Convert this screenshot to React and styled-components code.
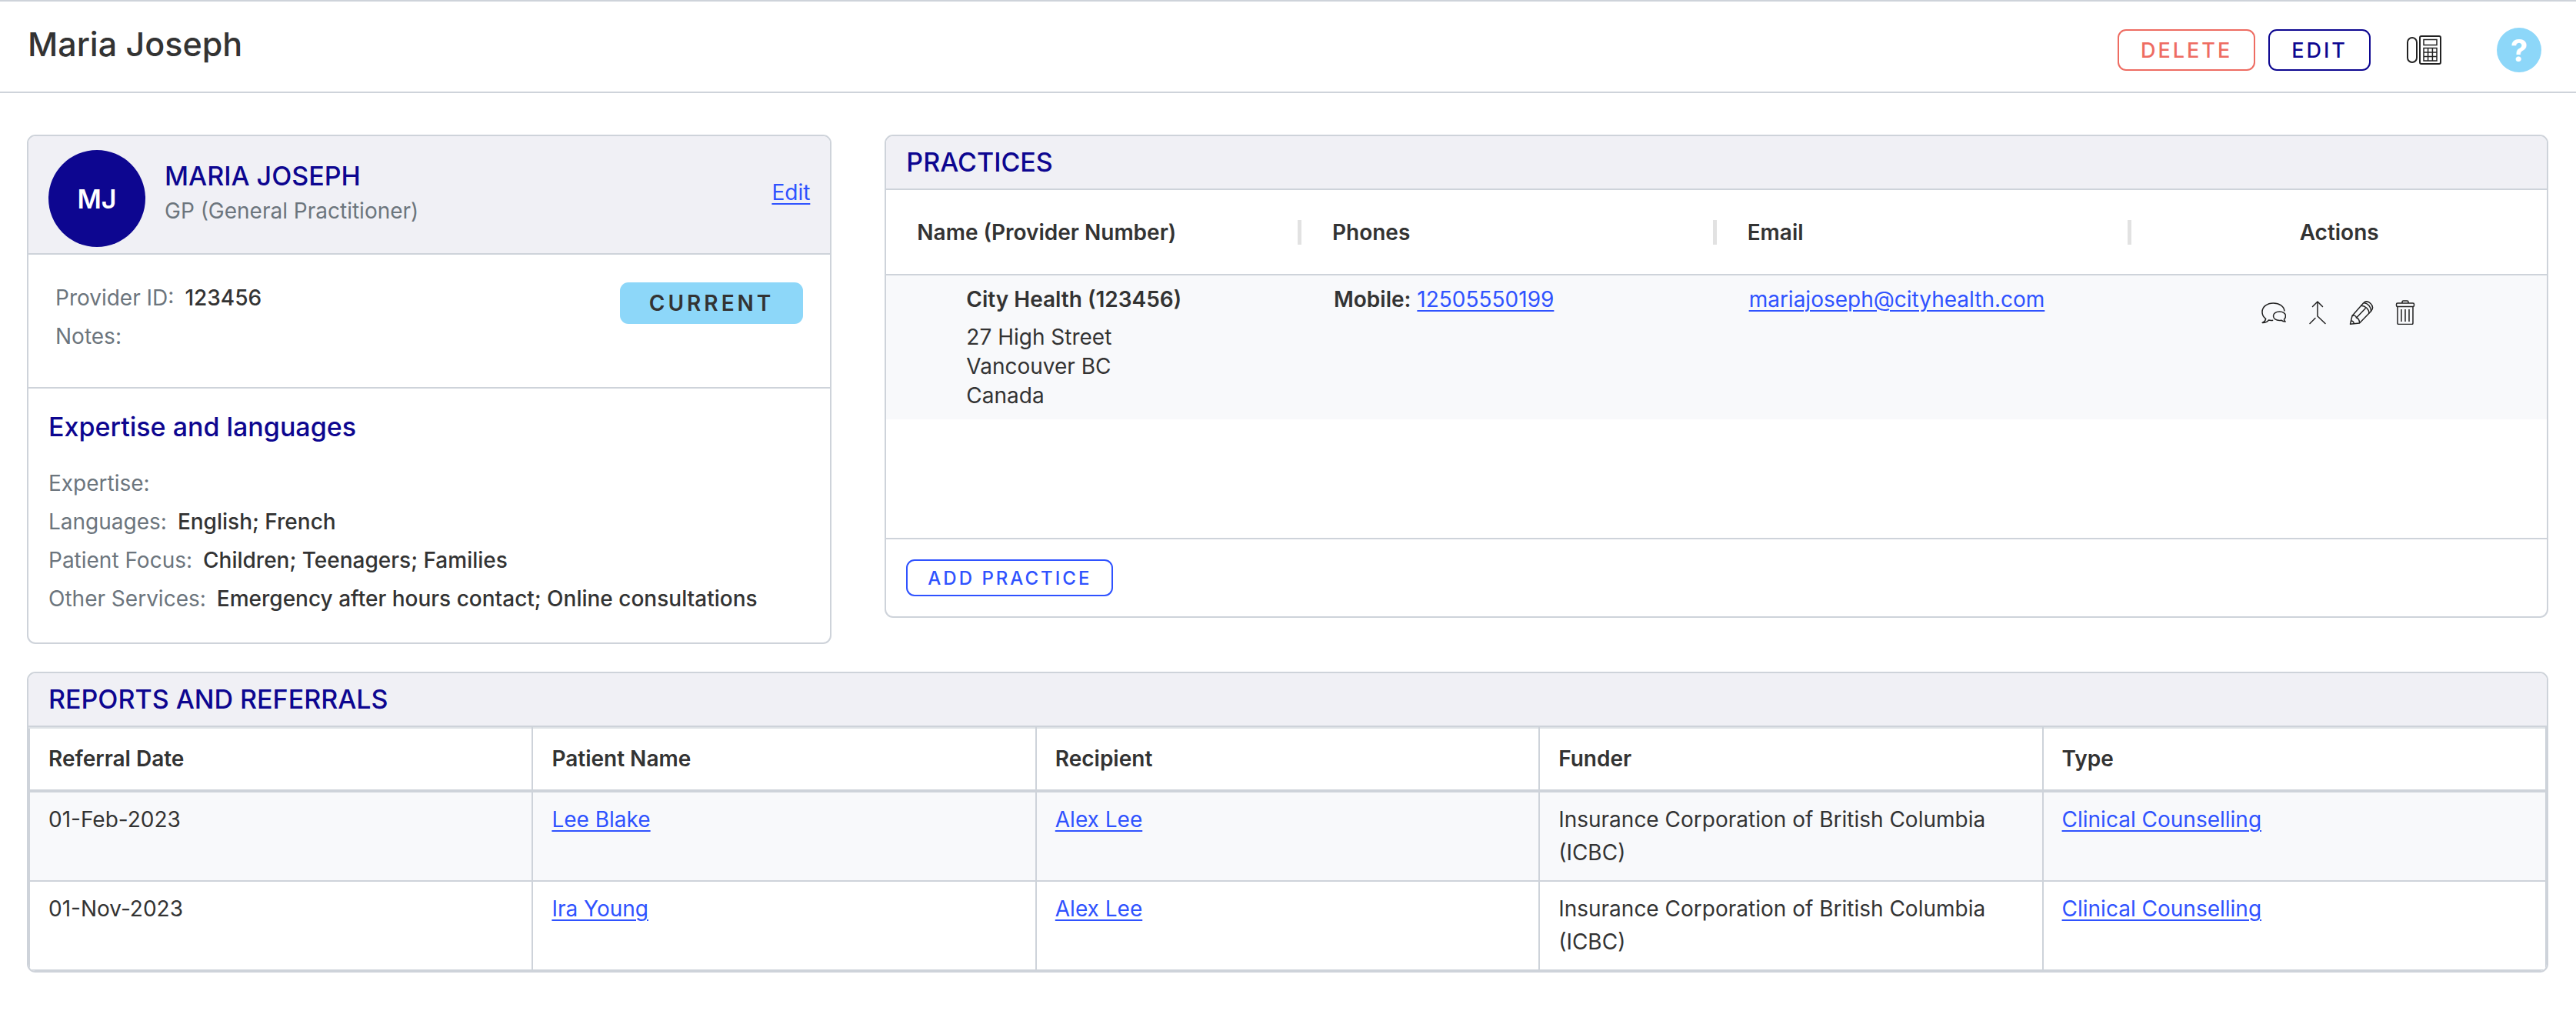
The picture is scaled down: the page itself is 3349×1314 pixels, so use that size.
import React from 'react';
import styled, { createGlobalStyle } from 'styled-components';

const provider = {
    name: 'Maria Joseph',
    initials: 'MJ',
    role: 'GP (General Practitioner)',
    id: '123456',
    notes: '',
    status: 'Current',
};

const expertise = [
    { label: 'Expertise:', value: '' },
    { label: 'Languages:', value: 'English; French' },
    { label: 'Patient Focus:', value: 'Children; Teenagers; Families' },
    { label: 'Other Services:', value: 'Emergency after hours contact; Online consultations' },
];

const practices = [
    {
        name: 'City Health (123456)',
        address: ['27 High Street', 'Vancouver BC', 'Canada'],
        mobile: '12505550199',
        email: 'mariajoseph@cityhealth.com',
    },
];

const referrals = [
    {
        date: '01-Feb-2023',
        patient: 'Lee Blake',
        recipient: 'Alex Lee',
        funder: 'Insurance Corporation of British Columbia (ICBC)',
        type: 'Clinical Counselling',
    },
    {
        date: '01-Nov-2023',
        patient: 'Ira Young',
        recipient: 'Alex Lee',
        funder: 'Insurance Corporation of British Columbia (ICBC)',
        type: 'Clinical Counselling',
    },
];

const PhoneIcon = () => (
    <svg width="46" height="38" viewBox="0 0 46 38" fill="none" stroke="currentColor" strokeWidth="2" aria-hidden="true">
        <rect x="1" y="3" width="12" height="32" rx="6" />
        <rect x="17" y="1" width="27" height="36" rx="2" />
        <path strokeWidth="1.5" d="M22 5.5h17v7H22zM22 16.5h17v16.5H22zM22 22h17M22 27.5h17M27.6 16.5v16.5M33.4 16.5v16.5" />
    </svg>
);

const ChatIcon = () => (
    <svg width="32" height="32" viewBox="0 0 32 32" fill="none" stroke="currentColor" strokeWidth="1.5" strokeLinejoin="round" aria-hidden="true">
        <path d="M30 14.5C29.5 8 23.5 4 15.5 4 7.5 4 1 8.7 1 15.5c0 4 1.8 6.7 4.7 8.800C5.3 26.5 3.5 28.5 1.2 29.5c3.6.2 6.4-1.2 8.3-3.5 1.8.5 3.7.6 5.7.2" />
        <path d="M29.5 25c1.3-1.2 2-2.900 2-4.500 0-3.200-3.500-5.500-8-5.500s-8 2.300-8 5.700 3.500 5.800 8 5.800c.8 0 1.500-.1 2.200-.3 1.600 1.200 3.300 1.900 5.500 1.800-1.200-.8-1.700-1.700-1.700-3z" />
    </svg>
);

const MergeIcon = () => (
    <svg width="32" height="32" viewBox="0 0 32 32" fill="none" stroke="currentColor" strokeWidth="1.5" strokeLinecap="round" aria-hidden="true">
        <path d="M16 2v19l10 9.5M9.5 8.500L16 2l6.5 6.5M6 30.500l7-7" />
    </svg>
);

const PencilIcon = () => (
    <svg width="32" height="32" viewBox="0 0 32 32" fill="none" stroke="currentColor" strokeWidth="1.5" strokeLinejoin="round" aria-hidden="true">
        <path d="M1.5 31.200L4 20.500L18.500 4c3-3 6.500-2.500 9.500.5s3.500 6.500.5 10L13.500 30z" />
        <path d="M15.500 7.300c5.500 0 10.500 4.500 10.500 10M19 3.500c5.500.5 9.500 5 9.500 11M9.500 23L21.500 10.500M4 20.500c3-1 5 0 5.500 2.500 2.500.5 4 3 4 7M2.500 27c2 0 3.500 1.500 4 3.700" />
    </svg>
);

const TrashIcon = () => (
    <svg width="32" height="32" viewBox="0 0 32 32" fill="none" stroke="currentColor" strokeWidth="1.5" strokeLinejoin="round" aria-hidden="true">
        <path d="M12 4V2.500c0-1 .5-1.500 1.500-1.500h5c1 0 1.500.5 1.500 1.500V4" />
        <rect x="4.500" y="4" width="23" height="4.500" rx="1.500" />
        <path d="M6 8.500v21.500c0 1 .5 1.500 1.500 1.500h17c1 0 1.500-.5 1.500-1.500V8.500M11 12v16M16 12v16M21 12v16" />
    </svg>
);

const App = () => {
    return (
        <>
            <GlobalStyle />
            <Header>
                <Title>{provider.name}</Title>
                <HeaderActions>
                    <ButtonGroup>
                        <OutlineButton type="button" $color="#ee6c62">Delete</OutlineButton>
                        <OutlineButton type="button" $color="#0d0690">Edit</OutlineButton>
                    </ButtonGroup>
                    <PhoneButton type="button" aria-label="Phone"><PhoneIcon /></PhoneButton>
                    <HelpButton type="button" aria-label="Help">?</HelpButton>
                </HeaderActions>
            </Header>

            <main>
                <Columns>
                    <SideColumn>
                        <Card>
                            <ProfileHeader>
                                <Avatar>{provider.initials}</Avatar>
                                <ProfileText>
                                    <CardTitle>{provider.name}</CardTitle>
                                    <Role>{provider.role}</Role>
                                </ProfileText>
                                <Link href="#edit">Edit</Link>
                            </ProfileHeader>
                            <Details>
                                <div>
                                    <Field><Label>Provider ID:</Label><Value>{provider.id}</Value></Field>
                                    <Field><Label>Notes:</Label><Value>{provider.notes}</Value></Field>
                                </div>
                                <Status>{provider.status}</Status>
                            </Details>
                            <Expertise>
                                <SectionTitle>Expertise and languages</SectionTitle>
                                {expertise.map(({ label, value }) => (
                                    <Field key={label}><Label>{label}</Label><Value>{value}</Value></Field>
                                ))}
                            </Expertise>
                        </Card>
                    </SideColumn>

                    <MainColumn>
                        <Card>
                            <CardHeader><CardTitle>Practices</CardTitle></CardHeader>
                            <PracticesBody>
                                <PracticesTable>
                                    <thead>
                                        <tr>
                                            <th><HeadCell>Name (Provider Number)</HeadCell></th>
                                            <th><HeadCell>Phones</HeadCell></th>
                                            <th><HeadCell>Email</HeadCell></th>
                                            <th><HeadCell $last>Actions</HeadCell></th>
                                        </tr>
                                    </thead>
                                    <tbody>
                                        {practices.map((practice) => (
                                            <tr key={practice.name}>
                                                <PracticeCell $indent>
                                                    <PracticeName>{practice.name}</PracticeName>
                                                    {practice.address.map((line) => <div key={line}>{line}</div>)}
                                                </PracticeCell>
                                                <PracticeCell>
                                                    <b>Mobile:</b> <Link href={`tel:${practice.mobile}`}>{practice.mobile}</Link>
                                                </PracticeCell>
                                                <PracticeCell>
                                                    <Link href={`mailto:${practice.email}`}>{practice.email}</Link>
                                                </PracticeCell>
                                                <td>
                                                    <RowActions>
                                                        <IconButton type="button" aria-label="Message"><ChatIcon /></IconButton>
                                                        <IconButton type="button" aria-label="Merge"><MergeIcon /></IconButton>
                                                        <IconButton type="button" aria-label="Edit practice"><PencilIcon /></IconButton>
                                                        <IconButton type="button" aria-label="Delete practice"><TrashIcon /></IconButton>
                                                    </RowActions>
                                                </td>
                                            </tr>
                                        ))}
                                    </tbody>
                                </PracticesTable>
                            </PracticesBody>
                            <CardFooter>
                                <AddButton type="button">Add practice</AddButton>
                            </CardFooter>
                        </Card>
                    </MainColumn>
                </Columns>

                <Reports>
                    <Card>
                        <CardHeader><CardTitle>Reports and referrals</CardTitle></CardHeader>
                        <ReportsTable>
                            <thead>
                                <tr>
                                    <th>Referral Date</th>
                                    <th>Patient Name</th>
                                    <th>Recipient</th>
                                    <th>Funder</th>
                                    <th>Type</th>
                                </tr>
                            </thead>
                            <tbody>
                                {referrals.map((referral) => (
                                    <tr key={referral.date}>
                                        <td>{referral.date}</td>
                                        <td><Link href="#patient">{referral.patient}</Link></td>
                                        <td><Link href="#recipient">{referral.recipient}</Link></td>
                                        <td>{referral.funder}</td>
                                        <td><Link href="#report">{referral.type}</Link></td>
                                    </tr>
                                ))}
                            </tbody>
                        </ReportsTable>
                    </Card>
                </Reports>
            </main>
        </>
    );
};

export default App;

const GlobalStyle = createGlobalStyle`
    * {
        box-sizing: border-box;
    }
    body {
        margin: 0;
        background: #fff;
        color: #333;
        font-family: Inter, "Liberation Sans", sans-serif;
        font-size: 28px;
        line-height: 43px;
    }
    button {
        font-family: inherit;
        cursor: pointer;
    }
`;

const Header = styled.header`
    display: flex;
    align-items: flex-start;
    justify-content: space-between;
    padding: 34px 45px 25px 36px;
    border-top: 2px solid #ced3da;
    border-bottom: 2px solid #ced3da;
`;

const Title = styled.h1`
    margin: 0;
    font-size: 43px;
    font-weight: 500;
    line-height: 43px;
`;

const HeaderActions = styled.div`
    display: flex;
    align-items: center;
    gap: 47px;
`;

const ButtonGroup = styled.div`
    display: flex;
    gap: 17px;
`;

const OutlineButton = styled.button`
    height: 54px;
    padding: 0 28px;
    border: 2px solid ${props => props.$color};
    border-radius: 11px;
    background: #fff;
    color: ${props => props.$color};
    font-size: 27px;
    font-weight: 500;
    letter-spacing: 3px;
    text-transform: uppercase;
`;

const AddButton = styled(OutlineButton).attrs({ $color: '#2f52ff' })`
    height: 48px;
    padding: 0 26px;
    font-size: 24px;
`;

const IconButton = styled.button`
    display: flex;
    padding: 0;
    border: none;
    background: none;
    color: #222;
`;

const PhoneButton = styled(IconButton)`
    margin-right: 24px;
`;

const HelpButton = styled.button`
    width: 58px;
    height: 58px;
    padding: 0;
    border: none;
    border-radius: 50%;
    background: #8dd7f9;
    color: #fff;
    font-size: 40px;
    font-weight: 700;
`;

const Columns = styled.div`
    display: grid;
    grid-template-columns: 1fr 2fr;
    align-items: start;
    padding-top: 54px;
`;

const SideColumn = styled.div`
    padding: 0 35px;
`;

const MainColumn = styled.div`
    padding: 0 36px 0 34px;
`;

const Reports = styled.div`
    padding: 36px 36px 48px 35px;
`;

const Card = styled.section`
    overflow: hidden;
    border: 2px solid #ced3da;
    border-radius: 11px;
`;

const CardHeader = styled.div`
    display: flex;
    align-items: center;
    height: 70px;
    padding: 0 26px;
    border-bottom: 2px solid #ced3da;
    background: #f0f0f5;
`;

const CardTitle = styled.h2`
    margin: 0;
    color: #0d0690;
    font-size: 34px;
    font-weight: 500;
    line-height: 48px;
    text-transform: uppercase;
`;

const ProfileHeader = styled(CardHeader)`
    height: 154px;
    padding-bottom: 6px;
`;

const Avatar = styled.div`
    display: flex;
    align-items: center;
    justify-content: center;
    width: 126px;
    height: 126px;
    margin-top: 16px;
    border-radius: 50%;
    background: #0d0690;
    color: #fff;
    font-size: 34px;
    font-weight: 600;
`;

const ProfileText = styled.div`
    flex: 1;
    padding: 0 25px;
`;

const Role = styled.div`
    color: #6c757d;
`;

const Link = styled.a`
    color: #2f52ff;
    text-decoration: underline;
    text-decoration-thickness: 2px;
    text-underline-offset: 4px;
`;

const Details = styled.div`
    display: flex;
    align-items: flex-start;
    justify-content: space-between;
    height: 174px;
    padding: 31px 35px;
    border-bottom: 2px solid #ced3da;
`;

const Field = styled.div`
    display: flex;
    gap: 14px;
    line-height: 50px;
`;

const Label = styled.span`
    color: #6c757d;
`;

const Value = styled.span`
    font-weight: 500;
`;

const Status = styled.div`
    height: 54px;
    margin-top: 5px;
    padding: 0 38px;
    border-radius: 11px;
    background: #8dd7f9;
    font-weight: 600;
    line-height: 54px;
    letter-spacing: 4px;
    text-transform: uppercase;
`;

const Expertise = styled.div`
    padding: 26px 26px 32px;
`;

const SectionTitle = styled.h3`
    margin: 0 0 24px;
    color: #0d0690;
    font-size: 34px;
    font-weight: 500;
    line-height: 48px;
`;

const PracticesBody = styled.div`
    min-height: 454px;
    border-bottom: 2px solid #ced3da;
`;

const PracticesTable = styled.table`
    width: 100%;
    table-layout: fixed;
    border-collapse: collapse;
    line-height: 38px;

    th {
        padding: 0;
        border-bottom: 2px solid #ced3da;
        font-weight: 600;
    }
    td {
        padding: 12px 0;
        vertical-align: top;
    }
    tbody tr {
        background: #f8f9fb;
    }
`;

const HeadCell = styled.div`
    display: flex;
    align-items: center;
    justify-content: ${props => props.$last ? 'center' : 'space-between'};
    height: 109px;
    padding-left: ${props => props.$last ? 0 : '40px'};

    &::after {
        content: ${props => props.$last ? 'none' : '""'};
        width: 5px;
        height: 32px;
        background: #e2e2e2;
    }
`;

const PracticeCell = styled.td`
    && {
        padding-left: ${props => props.$indent ? '104px' : '42px'};
    }
    b {
        font-weight: 600;
    }
`;

const PracticeName = styled.div`
    margin-bottom: 11px;
    font-weight: 600;
`;

const RowActions = styled.div`
    display: flex;
    justify-content: center;
    gap: 25px;
    padding-top: 20px;
`;

const CardFooter = styled.div`
    display: flex;
    padding: 26px;
`;

const ReportsTable = styled.table`
    width: 100%;
    table-layout: fixed;
    border-collapse: collapse;
    border: 2px solid #ced3da;

    th, td {
        padding: 14px 24px;
        border: 2px solid #ced3da;
        text-align: left;
        vertical-align: top;
    }
    th {
        padding: 18px 24px;
        border-top-color: #dee2e6;
        border-bottom-width: 4px;
        font-weight: 600;
    }
    tbody tr:nth-child(odd) {
        background: #f8f9fb;
    }
`;
